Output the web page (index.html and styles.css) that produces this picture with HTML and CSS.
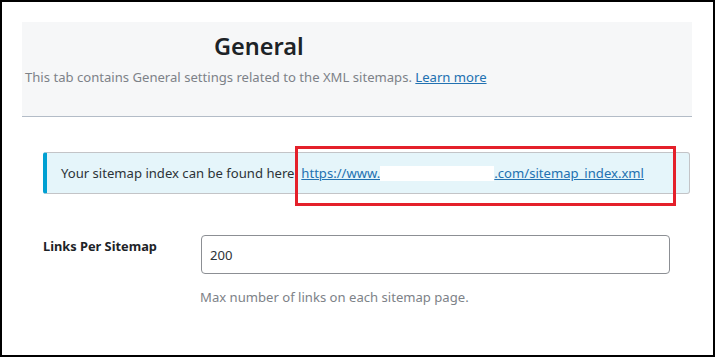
FILE: index.html
```html
<!DOCTYPE html>
<html lang="en">
<head>
  <meta charset="UTF-8" />
  <meta name="viewport" content="width=device-width, initial-scale=1.0"/>
  <title>Sitemap Settings - General</title>
  <link rel="stylesheet" href="styles.css">
</head>
<body>
  <div class="wrap">
    <!-- Tab header -->
    <div class="tab-header">
      <h2>General</h2>
      <p class="tab-desc">This tab contains General settings related to the XML sitemaps. <a href="#">Learn more</a></p>
    </div>

    <div class="tab-body">
      <div class="notice">
        <p>Your sitemap index can be found here: <a href="#">https://www.<span class="redact"></span>.com/sitemap_index.xml</a></p>
        <div class="highlight"></div>
      </div>

      <div class="field-row">
        <label class="field-label" for="links-per-sitemap">Links Per Sitemap</label>
        <div class="field-control">
          <input type="text" id="links-per-sitemap" value="200">
          <p class="field-help">Max number of links on each sitemap page.</p>
        </div>
      </div>
    </div>
  </div>
</body>
</html>
```

FILE: styles.css
```css
:root {
  --text: #1d2327;
  --muted: #7d8288;
  --link: #2271b1;
  --panel: #f6f7f8;
}

* {
  box-sizing: border-box;
}

html, body {
  height: 100%;
}

body {
  margin: 0;
  font-family: 'Noto Sans', 'Open Sans', sans-serif;
  font-size: 13.1px;
  color: var(--text);
  background: #fff;
  border: 2px solid #000;
  overflow: hidden;
}

.wrap {
  padding: 20px 21px 0 20px;
}

/* Tab header */
.tab-header {
  background: var(--panel);
  border-bottom: 1px solid #b3bcc7;
  height: 95px;
  padding: 8px 3px 0;
}

.tab-header h2 {
  margin: 0 0 0 189px;
  font-size: 23.5px;
  font-weight: 600;
  line-height: 32px;
  color: #1d2327;
}

.tab-desc {
  margin: 6px 0 0;
  color: var(--muted);
  line-height: 18px;
}

.tab-desc a,
.notice a {
  color: var(--link);
}

/* Body */
.tab-body {
  padding: 35px 2px 0 21px;
}

.notice {
  position: relative;
  background: #e5f5fa;
  border: 1px solid #c3c4c7;
  border-left: 4px solid #00a0d2;
  border-radius: 3px;
  height: 42px;
  padding: 0 14px;
  display: flex;
  align-items: center;
}

.notice p {
  margin: 0;
  color: #2c3338;
}

.redact {
  display: inline-block;
  width: 114px;
  height: 15px;
  background: #fff;
  vertical-align: -3px;
}

/* red annotation frame drawn over the notice */
.highlight {
  position: absolute;
  left: 248px;
  top: -7px;
  width: 381px;
  height: 60px;
  border: 3px solid #e4202a;
}

.field-row {
  display: flex;
  margin-top: 41px;
}

.field-label {
  width: 158px;
  font-weight: 700;
  font-size: 12.8px;
  padding-top: 2px;
  line-height: 18px;
}

.field-control {
  flex: 1;
}

.field-control input {
  display: block;
  width: 469px;
  height: 39px;
  border: 1px solid #8c8f94;
  border-radius: 4px;
  padding: 0 8px;
  font-family: inherit;
  font-size: 13.1px;
  color: #2c3338;
}

.field-help {
  margin: 14px 0 0 -1px;
  color: var(--muted);
}
```
